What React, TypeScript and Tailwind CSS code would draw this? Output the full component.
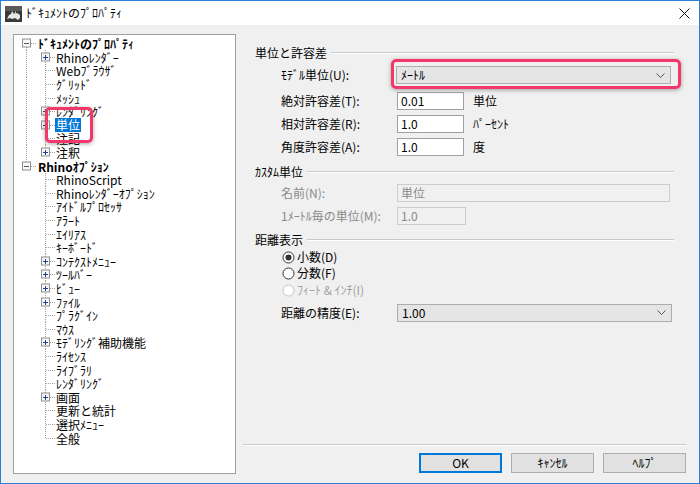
import React from 'react';

type Row = {
  label: string;
  level: 0 | 1;
  box?: 'plus' | 'minus';
  selected?: boolean;
  section: 0 | 1;
  lastChild?: boolean;
};

const docChildren = ['Rhinoﾚﾝﾀﾞｰ', 'Webﾌﾞﾗｳｻﾞ', 'ｸﾞﾘｯﾄﾞ', 'ﾒｯｼｭ', 'ﾚﾝﾀﾞﾘﾝｸﾞ', '単位', '注記', '注釈'];
const docPlus = ['Rhinoﾚﾝﾀﾞｰ', 'ﾚﾝﾀﾞﾘﾝｸﾞ', '単位', '注釈'];
const optChildren = [
  'RhinoScript', 'Rhinoﾚﾝﾀﾞｰｵﾌﾟｼｮﾝ', 'ｱｲﾄﾞﾙﾌﾟﾛｾｯｻ', 'ｱﾗｰﾄ', 'ｴｲﾘｱｽ', 'ｷｰﾎﾞｰﾄﾞ', 'ｺﾝﾃｸｽﾄﾒﾆｭｰ', 'ﾂｰﾙﾊﾞｰ',
  'ﾋﾞｭｰ', 'ﾌｧｲﾙ', 'ﾌﾟﾗｸﾞｲﾝ', 'ﾏｳｽ', 'ﾓﾃﾞﾘﾝｸﾞ補助機能', 'ﾗｲｾﾝｽ', 'ﾗｲﾌﾞﾗﾘ', 'ﾚﾝﾀﾞﾘﾝｸﾞ', '画面', '更新と統計', '選択ﾒﾆｭｰ', '全般',
];
const optPlus = ['ｺﾝﾃｸｽﾄﾒﾆｭｰ', 'ﾂｰﾙﾊﾞｰ', 'ﾋﾞｭｰ', 'ﾌｧｲﾙ', 'ﾓﾃﾞﾘﾝｸﾞ補助機能', '画面'];

const rows: Row[] = [
  { label: 'ﾄﾞｷｭﾒﾝﾄのﾌﾟﾛﾊﾟﾃｨ', level: 0, box: 'minus', section: 0 },
  ...docChildren.map((l, i): Row => ({
    label: l, level: 1, section: 0, box: docPlus.includes(l) ? 'plus' : undefined,
    selected: l === '単位', lastChild: i === docChildren.length - 1,
  })),
  { label: 'Rhinoｵﾌﾟｼｮﾝ', level: 0, box: 'minus', section: 1 },
  ...optChildren.map((l, i): Row => ({
    label: l, level: 1, section: 1, box: optPlus.includes(l) ? 'plus' : undefined,
    lastChild: i === optChildren.length - 1,
  })),
];

// row pitch in the screenshot is ~13.6px (scaled capture), so round the tops
const centre = (i: number) => 44.5 + 13.6 * i;
const tops = rows.map((_, i) => Math.round(centre(i) - 7));

const dot = '#a0a0a0';

const Expander = ({ x, cy, kind }: { x: number; cy: number; kind: 'plus' | 'minus' }) => (
  <g>
    <rect x={x + 0.5} y={cy - 4} width={8} height={8} fill="#f7f7f7" stroke="#8e8f8f" />
    <line x1={x + 2} y1={cy + 0.5} x2={x + 7} y2={cy + 0.5} stroke={kind === 'plus' ? '#23408e' : '#5a5a5a'} />
    {kind === 'plus' && <line x1={x + 4.5} y1={cy - 2} x2={x + 4.5} y2={cy + 3} stroke="#23408e" />}
  </g>
);

const Guide = ({ row, h }: { row: Row; h: number }) => {
  const cy = Math.floor(h / 2);
  const w = row.level === 0 ? 24 : 42;
  return (
    <svg width={w} height={h} className="shrink-0">
      {row.level === 0 ? (
        <>
          {row.section === 0 && <line x1={12.5} y1={cy + 4} x2={12.5} y2={h} stroke={dot} strokeDasharray="1 1" />}
          {row.section === 1 && <line x1={12.5} y1={0} x2={12.5} y2={cy - 4} stroke={dot} strokeDasharray="1 1" />}
          <line x1={17} y1={cy + 0.5} x2={23} y2={cy + 0.5} stroke={dot} strokeDasharray="1 1" />
          {row.box && <Expander x={8} cy={cy} kind={row.box} />}
        </>
      ) : (
        <>
          {row.section === 0 && <line x1={12.5} y1={0} x2={12.5} y2={h} stroke={dot} strokeDasharray="1 1" />}
          <line x1={31.5} y1={0} x2={31.5} y2={row.lastChild ? cy : h} stroke={dot} strokeDasharray="1 1" />
          <line x1={row.box ? 36 : 32} y1={cy + 0.5} x2={41} y2={cy + 0.5} stroke={dot} strokeDasharray="1 1" />
          {row.box && <Expander x={27} cy={cy} kind={row.box} />}
        </>
      )}
    </svg>
  );
};

const Tree = () => (
  <div className="w-[223px] h-[440px] shrink-0 border border-[#a0a0a0] bg-white pt-[2px] overflow-hidden">
    {rows.map((r, i) => {
      const h = i < rows.length - 1 ? tops[i + 1] - tops[i] : 14;
      return (
        <div key={i} className="flex items-center" style={{ height: h }}>
          <Guide row={r} h={h} />
          <span
            className={`whitespace-nowrap leading-[13px] ${r.level === 0 ? 'font-bold' : ''} ${
              r.selected ? 'bg-[#0078d7] text-white px-[1px] -ml-[1px] leading-[14px]' : 'text-black'
            }`}
          >
            {r.label}
          </span>
        </div>
      );
    })}
  </div>
);

const GroupHead = ({ title, mt }: { title: string; mt: string }) => (
  <div className={`flex items-center h-[14px] ${mt}`}>
    <span className="whitespace-nowrap">{title}</span>
    <div className="flex-1 ml-[4px] border-t border-[#c9c9c9] border-b border-b-white" />
  </div>
);

const Chevron = () => (
  <svg width="9" height="5" viewBox="0 0 9 5" className="shrink-0">
    <polyline points="0.5,0.5 4.5,4.5 8.5,0.5" fill="none" stroke="#555" />
  </svg>
);

const Combo = ({ value }: { value: string }) => (
  <div className="w-[275px] h-[18px] border border-[#adadad] bg-[#e5e5e5] flex items-center pl-[4px] pr-[5px]">
    <span className="flex-1">{value}</span>
    <Chevron />
  </div>
);

const Field = ({ label, value, unit, mt }: { label: string; value: string; unit: string; mt: string }) => (
  <div className={`flex items-center h-[18px] ${mt}`}>
    <span className="w-[116px] pl-[26px] box-content whitespace-nowrap">{label}</span>
    <div className="w-[67px] h-[18px] border border-[#a0a0a0] bg-white pl-[3px] flex items-center">{value}</div>
    <span className="ml-[9px]">{unit}</span>
  </div>
);

const Radio = ({ label, checked, disabled, mt }: { label: string; checked?: boolean; disabled?: boolean; mt: string }) => (
  <div className={`flex items-center h-[14px] pl-[27px] ${mt} ${disabled ? 'text-[#a0a0a0]' : ''}`}>
    <svg width="13" height="13" viewBox="0 0 13 13" className="shrink-0">
      <circle cx="6.5" cy="6.5" r="5.5" fill="white" stroke={disabled ? '#c4c4c4' : '#333333'} />
      {checked && <circle cx="6.5" cy="6.5" r="3" fill="#333333" />}
    </svg>
    <span className="ml-[2px] whitespace-nowrap">{label}</span>
  </div>
);

const Btn = ({ label, primary }: { label: string; primary?: boolean }) => (
  <div
    className={`w-[83px] h-[20px] flex items-center justify-center bg-[#e1e1e1] ${
      primary ? 'border-2 border-[#0078d7]' : 'border border-[#adadad]'
    }`}
  >
    {label}
  </div>
);

const RhinoIcon = () => (
  <svg width="17" height="16" viewBox="0 0 17 16" className="shrink-0">
    <rect x="0" y="0" width="17" height="16" fill="#3a3a3a" />
    <rect x="0" y="0" width="17" height="5" fill="#5a5a5a" />
    <path d="M2 13 L4 9 L6 8 L7 5 L9 8 L12 7 L15 9 L15 12 L13 14 L10 12 L7 13 L5 12 Z" fill="#e6e6e6" />
    <path d="M9 8 L11 5 L11 7.5 Z" fill="#e6e6e6" />
  </svg>
);

export default function App() {
  return (
    <div className="relative w-[700px] h-[484px] border border-[#2b7fd6] bg-[#f0f0f0] flex flex-col text-[12px] leading-[14px] text-black font-['Noto_Sans_CJK_JP',sans-serif] overflow-hidden">
      {/* title bar */}
      <div className="h-[24px] bg-white flex items-center shrink-0">
        <div className="ml-[4px] mt-[1px]">
          <RhinoIcon />
        </div>
        <span className="ml-[4px] text-[12px]">ﾄﾞｷｭﾒﾝﾄのﾌﾟﾛﾊﾟﾃｨ</span>
        <div className="flex-1" />
        <svg width="11" height="11" viewBox="0 0 11 11" className="mr-[9px]">
          <path d="M0.5 0.5 L10.5 10.5 M10.5 0.5 L0.5 10.5" stroke="#111" strokeWidth="1" />
        </svg>
      </div>

      {/* body */}
      <div className="flex flex-1 pt-[9px] pl-[12px]">
        <Tree />

        <div className="ml-[7px] w-[444px] flex flex-col">
          <div className="pl-[12px] pr-[13px] flex flex-col">
            <GroupHead title="単位と許容差" mt="mt-[12px]" />
            <div className="flex items-center h-[18px] mt-[6px]">
              <span className="w-[115px] pl-[26px] box-content whitespace-nowrap">ﾓﾃﾞﾙ単位(U):</span>
              <Combo value="ﾒｰﾄﾙ" />
            </div>
            <Field label="絶対許容差(T):" value="0.01" unit="単位" mt="mt-[8px]" />
            <Field label="相対許容差(R):" value="1.0" unit="ﾊﾟｰｾﾝﾄ" mt="mt-[5px]" />
            <Field label="角度許容差(A):" value="1.0" unit="度" mt="mt-[5px]" />

            <GroupHead title="ｶｽﾀﾑ単位" mt="mt-[9px]" />
            <div className="flex items-center h-[18px] mt-[5px] text-[#8a8a8a]">
              <span className="w-[116px] pl-[26px] box-content whitespace-nowrap">名前(N):</span>
              <div className="w-[273px] h-[18px] border border-[#cccccc] bg-[#f0f0f0] pl-[3px] flex items-center">単位</div>
            </div>
            <div className="flex items-center h-[18px] mt-[5px] text-[#8a8a8a]">
              <span className="w-[116px] pl-[26px] box-content whitespace-nowrap">1ﾒｰﾄﾙ毎の単位(M):</span>
              <div className="w-[69px] h-[18px] border border-[#cccccc] bg-[#f0f0f0] pl-[3px] flex items-center">1.0</div>
            </div>

            <GroupHead title="距離表示" mt="mt-[8px]" />
            <Radio label="小数(D)" checked mt="mt-[3px]" />
            <Radio label="分数(F)" mt="mt-[2px]" />
            <Radio label="ﾌｨｰﾄ & ｲﾝﾁ(I)" disabled mt="mt-[3px]" />
            <div className="flex items-center h-[19px] mt-[6px]">
              <span className="w-[116px] pl-[26px] box-content whitespace-nowrap">距離の精度(E):</span>
              <Combo value="1.00" />
            </div>
          </div>

          <div className="flex-1" />
          <div className="border-t border-[#c9c9c9] border-b border-b-white mr-[1px]" />
          <div className="flex justify-end gap-[9px] mt-[7px] mb-[10px] mr-[1px]">
            <Btn label="OK" primary />
            <Btn label="ｷｬﾝｾﾙ" />
            <Btn label="ﾍﾙﾌﾟ" />
          </div>
        </div>
      </div>

      {/* pink annotation overlays */}
      <div className="absolute left-[44px] top-[106px] w-[48px] h-[36px] rounded-[5px] border-[3px] border-[#f2386b] shadow-[0_1px_4px_rgba(0,0,0,0.35)]" />
      <div className="absolute left-[390px] top-[58px] w-[290px] h-[30px] rounded-[5px] border-[3px] border-[#f2386b] shadow-[0_1px_4px_rgba(0,0,0,0.35)]" />
    </div>
  );
}
